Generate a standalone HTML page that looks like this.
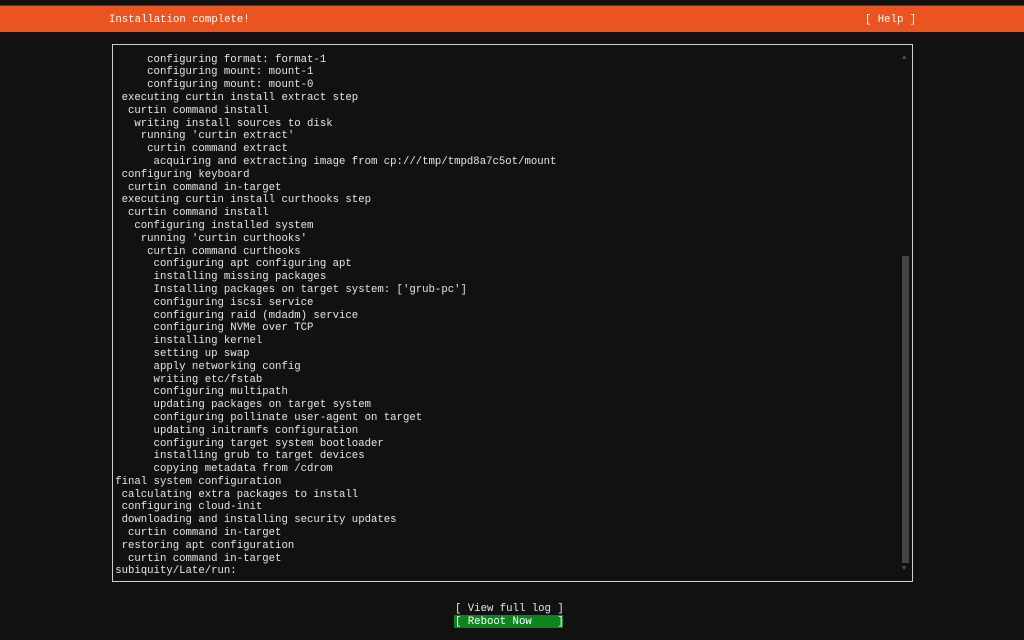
<!DOCTYPE html><html><head><style>
body{margin:0;width:1024px;height:640px;background:#111;overflow:hidden;position:relative;font-family:"Liberation Mono",monospace;font-size:10.67px;color:#e6e6e6}
.a{position:absolute;white-space:pre;line-height:12.8px}
</style></head><body>
<div style="position:absolute;left:0;top:5px;width:1024px;height:1px;background:#7a2a10"></div>
<div style="position:absolute;left:0;top:6px;width:1024px;height:26px;background:#e95420"></div>
<div class="a" style="left:109px;top:14px;color:#fff">Installation complete!</div>
<div class="a" style="left:865px;top:14px;color:#fff">[ Help ]</div>
<div style="position:absolute;left:112px;top:44px;width:799px;height:536px;border:1px solid #cfcfcf"></div>
<div class="a" style="left:902px;top:52px;color:#555;font-size:7px">▲</div>
<div class="a" style="left:902px;top:563px;color:#555;font-size:7px">▼</div>
<div style="position:absolute;left:902px;top:256px;width:7px;height:307px;background:#444"></div>
<div class="a" style="left:115.2px;top:53.6px">     configuring format: format-1
     configuring mount: mount-1
     configuring mount: mount-0
 executing curtin install extract step
  curtin command install
   writing install sources to disk
    running 'curtin extract'
     curtin command extract
      acquiring and extracting image from cp:///tmp/tmpd8a7c5ot/mount
 configuring keyboard
  curtin command in-target
 executing curtin install curthooks step
  curtin command install
   configuring installed system
    running 'curtin curthooks'
     curtin command curthooks
      configuring apt configuring apt
      installing missing packages
      Installing packages on target system: ['grub-pc']
      configuring iscsi service
      configuring raid (mdadm) service
      configuring NVMe over TCP
      installing kernel
      setting up swap
      apply networking config
      writing etc/fstab
      configuring multipath
      updating packages on target system
      configuring pollinate user-agent on target
      updating initramfs configuration
      configuring target system bootloader
      installing grub to target devices
      copying metadata from /cdrom
final system configuration
 calculating extra packages to install
 configuring cloud-init
 downloading and installing security updates
  curtin command in-target
 restoring apt configuration
  curtin command in-target
subiquity/Late/run:</div>
<div class="a" style="left:455px;top:603px">[ View full log ]</div>
<div style="position:absolute;left:454px;top:615px;width:109px;height:13px;background:#0e8420"></div>
<div class="a" style="left:455px;top:615.6px;color:#fff">[ Reboot Now    ]</div>
</body></html>
